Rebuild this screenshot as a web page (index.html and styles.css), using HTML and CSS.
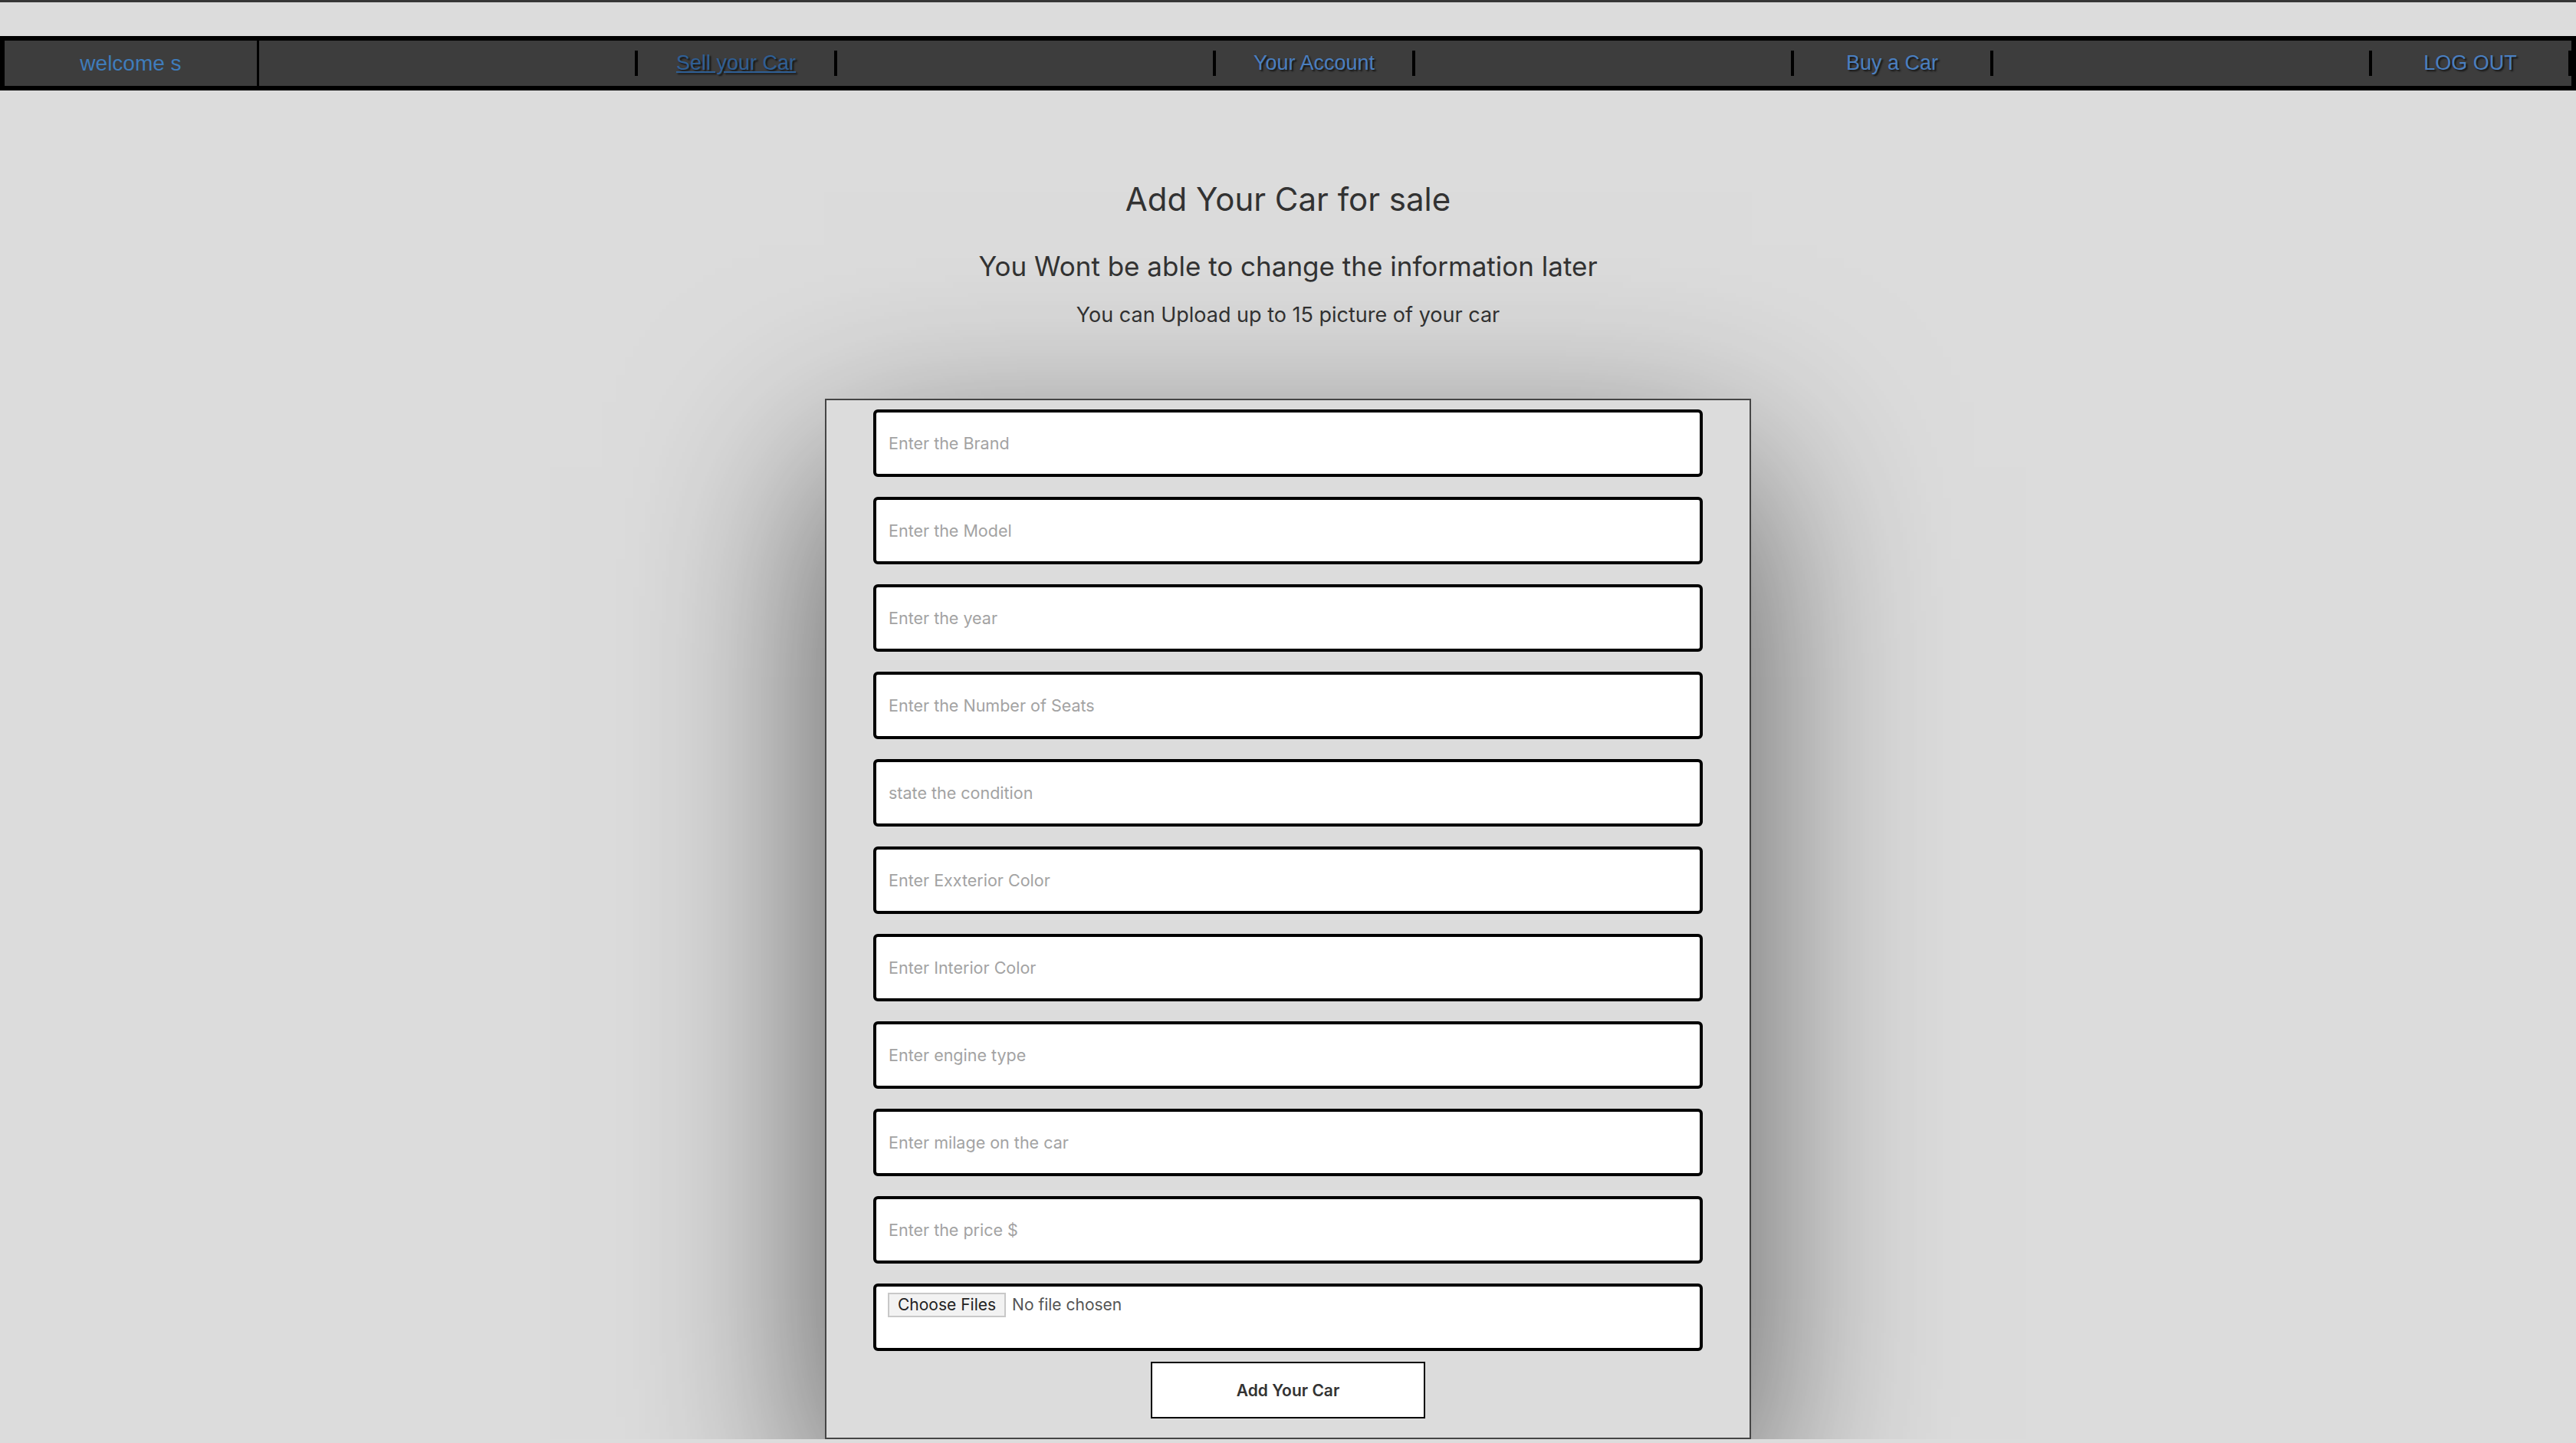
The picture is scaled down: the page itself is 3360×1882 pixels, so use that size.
FILE: index.html
```html
<!DOCTYPE html>
<html lang="en">
<head>
<meta charset="utf-8">
<title>Add Your Car for sale</title>
<link rel="stylesheet" href="styles.css">
</head>
<body>
<div class="topline"></div>
<nav class="nav">
  <div class="welcome">welcome s</div>
  <ul class="links">
    <li><a class="current" href="#">Sell your Car</a></li>
    <li><a href="#">Your Account</a></li>
    <li><a href="#">Buy a Car</a></li>
    <li><a href="#">LOG OUT</a></li>
  </ul>
</nav>
<main class="page">
  <h1 class="title">Add Your Car for sale</h1>
  <h2 class="subtitle">You Wont be able to change the information later</h2>
  <p class="note">You can Upload up to 15 picture of your car</p>
  <form class="card">
    <input class="field" type="text" placeholder="Enter the Brand">
    <input class="field" type="text" placeholder="Enter the Model">
    <input class="field" type="text" placeholder="Enter the year">
    <input class="field" type="text" placeholder="Enter the Number of Seats">
    <input class="field" type="text" placeholder="state the condition">
    <input class="field" type="text" placeholder="Enter Exxterior Color">
    <input class="field" type="text" placeholder="Enter Interior Color">
    <input class="field" type="text" placeholder="Enter engine type">
    <input class="field" type="text" placeholder="Enter milage on the car">
    <input class="field" type="text" placeholder="Enter the price $">
    <div class="file-box"><input class="file" type="file" multiple></div>
    <button class="submit" type="button">Add Your Car</button>
  </form>
</main>
</body>
</html>
```
FILE: styles.css
```css
html, body {
  margin: 0;
  padding: 0;
}
body {
  background: #dcdcdc;
  font-family: Inter, "Noto Sans", sans-serif;
  color: #333;
  overflow: hidden;
}
.topline {
  height: 3px;
  background: #363636;
}
.nav {
  margin-top: 44px;
  display: flex;
  height: 59px;
  background: #3d3d3d;
  border: 6px solid #000;
  font-family: "Liberation Sans", Arial, sans-serif;
  font-size: 27px;
}
.welcome {
  width: 329px;
  flex: none;
  border-right: 3px solid #000;
  display: flex;
  align-items: center;
  justify-content: center;
  color: #3f7cbb;
  font-size: 28px;
}
.links {
  flex: 1;
  margin: 0;
  padding: 0;
  list-style: none;
  display: grid;
  grid-template-columns: repeat(4, 1fr);
  align-items: center;
}
.links li {
  justify-self: end;
  box-sizing: border-box;
  width: 264px;
  height: 33px;
  border-left: 4px solid #000;
  border-right: 4px solid #000;
  display: flex;
  align-items: center;
  justify-content: center;
}
.links a {
  color: #4a7fc0;
  text-decoration: none;
  text-shadow: 2px 2px 2px #151515;
}
.links a.current {
  color: #2f5f95;
  text-decoration: underline;
}
.page {
  display: flex;
  flex-direction: column;
  align-items: center;
}
.title {
  margin: 116px 0 0;
  font-size: 42px;
  line-height: 52px;
  font-weight: 400;
  color: #333;
}
.subtitle {
  margin: 40px 0 0;
  font-size: 35px;
  line-height: 42px;
  font-weight: 400;
  color: #333;
}
.note {
  margin: 26px 0 0;
  font-size: 27px;
  line-height: 34px;
  color: #333;
}
.card {
  margin-top: 92px;
  box-sizing: border-box;
  width: 1208px;
  border: 2px solid #454545;
  padding: 12px 61px 25px;
  background: #dcdcdc;
  box-shadow: 0 90px 240px rgba(0, 0, 0, 0.6);
  display: flex;
  flex-direction: column;
}
.field, .file-box {
  box-sizing: border-box;
  width: 100%;
  height: 88px;
  margin: 0 0 26px;
  border: 4px solid #000;
  border-radius: 6px;
  background: #fff;
  font-family: Inter, "Noto Sans", sans-serif;
  font-size: 21.5px;
  color: #222;
  padding: 0 16px;
  outline: none;
}
.field::placeholder {
  color: #a3a3a3;
}
.file-box {
  padding: 8px 15px;
  margin-bottom: 14px;
}
.file {
  font-family: Inter, "Noto Sans", sans-serif;
  font-size: 21px;
  color: #555;
}
.file::file-selector-button {
  font-family: Inter, "Noto Sans", sans-serif;
  font-size: 21px;
  line-height: 26px;
  color: #222;
  background: #f2f2f2;
  border: 2px solid #c8c8c8;
  border-radius: 0;
  padding: 1px 11px;
  margin-right: 8px;
}
.submit {
  align-self: center;
  width: 358px;
  height: 74px;
  border: 2px solid #000;
  background: #fff;
  font-family: Inter, "Noto Sans", sans-serif;
  font-size: 21px;
  font-weight: 600;
  color: #333;
}
```
